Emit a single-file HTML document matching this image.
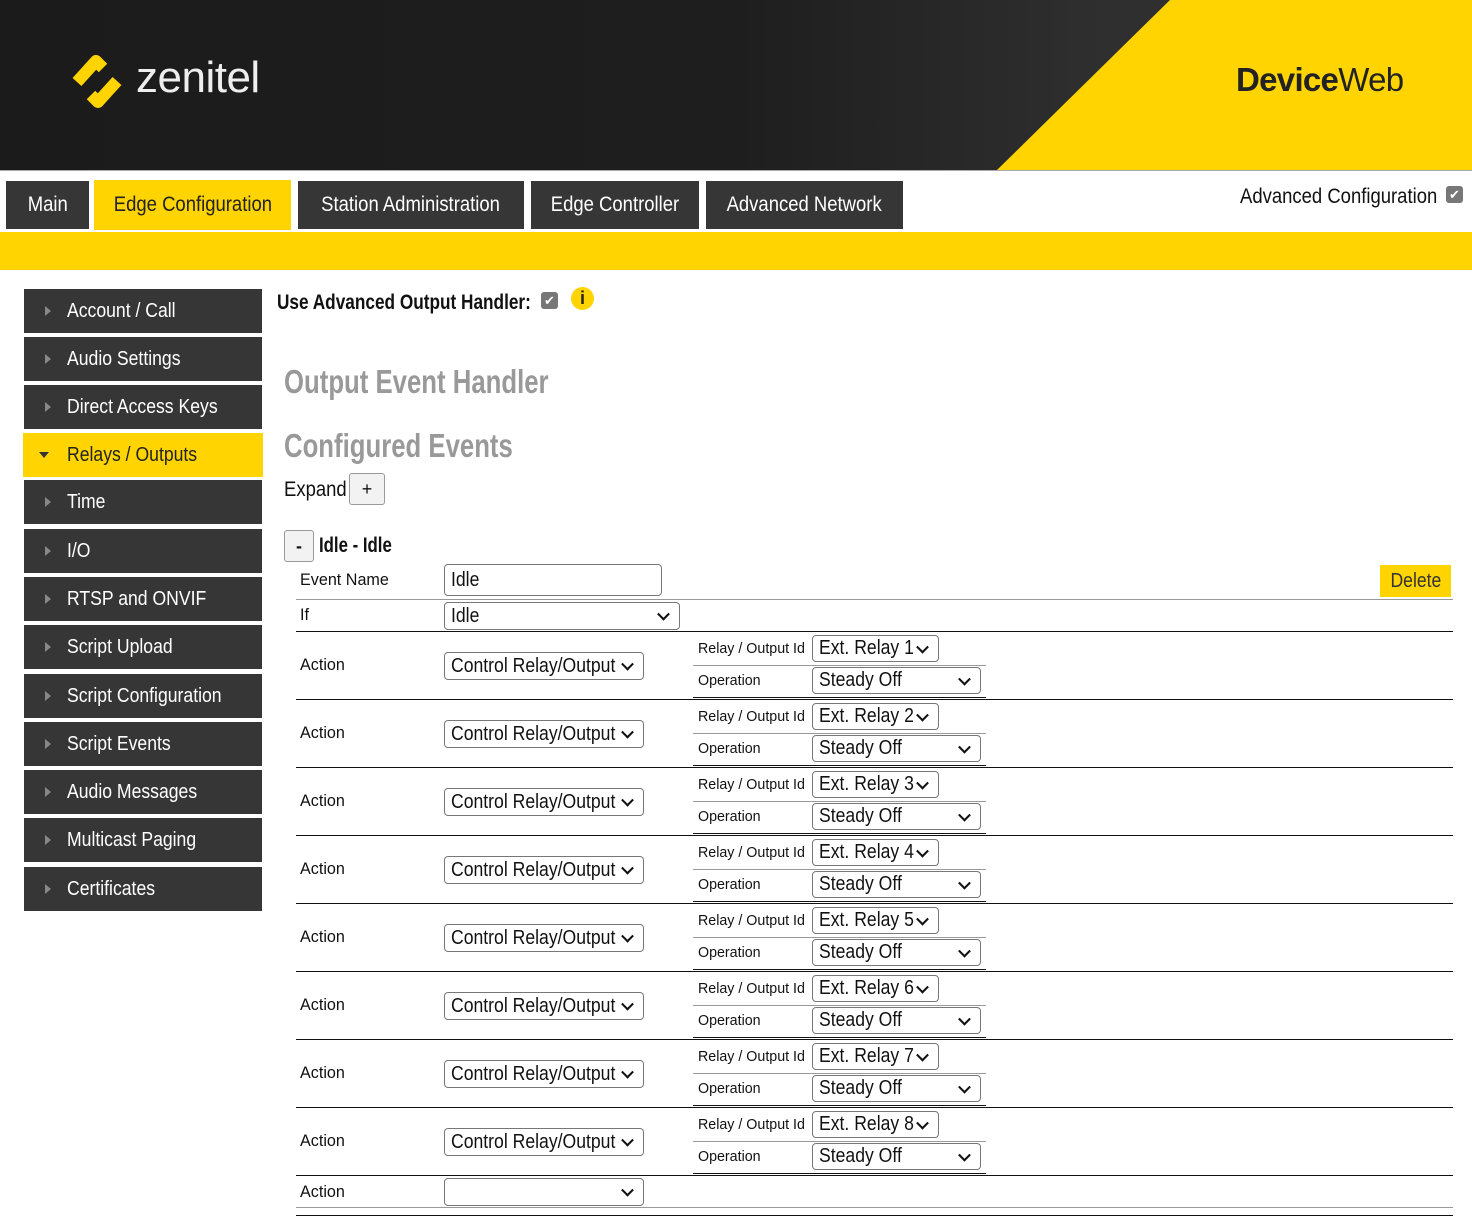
<!DOCTYPE html>
<html><head><meta charset="utf-8"><style>
*{box-sizing:border-box;margin:0;padding:0}
body{width:1472px;height:1224px;position:relative;background:#fff;font-family:"Liberation Sans",sans-serif;color:#111;overflow:hidden}
.a{position:absolute;white-space:nowrap}
.n{display:inline-block;transform:scaleX(.88);transform-origin:0 50%;white-space:nowrap}
.c{transform-origin:50% 50%}
.tab{position:absolute;top:181px;height:48px;background:#363636;color:#fff;font-size:21px;line-height:48px;text-align:center;white-space:nowrap}
.side{position:absolute;left:24px;width:238px;height:44px;background:#363636;color:#fff;font-size:20px;line-height:44px;padding-left:43px;white-space:nowrap}
.side:before{content:"";position:absolute;left:21px;top:17px;border-left:6px solid #888;border-top:5px solid transparent;border-bottom:5px solid transparent}
.side.y:before{display:none}
.sel{position:absolute;border:1px solid #777;border-radius:4px;background:#fff;font-size:20px;padding-left:6px;color:#111;white-space:nowrap;overflow:hidden}
.sel.ar:after{content:"";position:absolute;right:11px;top:50%;width:7px;height:7px;border-right:2px solid #111;border-bottom:2px solid #111;transform:translateY(-70%) rotate(45deg)}
.lbl{position:absolute;font-size:17px;color:#111;white-space:nowrap}
.sm{position:absolute;font-size:15px;color:#111;white-space:nowrap}
.lbl .n,.sm .n{transform:scaleX(.95)}
.hl{position:absolute;height:1px}
</style></head><body>
<div class="a" style="left:0;top:0;width:1472px;height:170px;background:linear-gradient(90deg,#1b1b1b 0%,#1e1e1e 50%,#2f2f2f 75%)"></div>
<svg class="a" style="left:0;top:0" width="1472" height="171"><polygon points="1170,0 1472,0 1472,170 997,170" fill="#ffd400"/>
<polyline points="77,82 96,61 103,68" fill="none" stroke="#ffd400" stroke-width="12" stroke-linejoin="round"/>
<polyline points="117,81 98,102 91,95" fill="none" stroke="#ffd400" stroke-width="12" stroke-linejoin="round"/></svg>
<div class="a" style="left:136px;top:50px;font-size:44px;color:#eee;line-height:56px;letter-spacing:-0.5px">zenitel</div>
<div class="a" style="left:1236px;top:58px;font-size:33px;color:#222;line-height:44px;letter-spacing:-0.7px"><b>Device</b>Web</div>
<div class="a" style="left:0;top:170px;width:1472px;height:1px;background:#aaa"></div>
<div class="tab" style="left:6px;width:83px"><span class="n c">Main</span></div>
<div class="tab" style="left:94px;width:197px;top:180px;height:50px;background:#ffd400;color:#222;line-height:50px"><span class="n c">Edge Configuration</span></div>
<div class="tab" style="left:298px;width:226px"><span class="n c">Station Administration</span></div>
<div class="tab" style="left:531px;width:168px"><span class="n c">Edge Controller</span></div>
<div class="tab" style="left:706px;width:197px"><span class="n c">Advanced Network</span></div>
<div class="a" style="left:1240px;top:184px;font-size:21px;line-height:26px"><span class="n">Advanced Configuration</span></div>
<div class="a" style="left:1446px;top:186px;width:17px;height:17px;background:#777;border-radius:3px;color:#fff;font-size:13px;text-align:center;line-height:17px">✔</div>
<div class="a" style="left:0;top:232px;width:1472px;height:38px;background:#ffd400"></div>

<div class="side" style="top:289px"><span class="n">Account / Call</span></div>
<div class="side" style="top:337px"><span class="n">Audio Settings</span></div>
<div class="side" style="top:385px"><span class="n">Direct Access Keys</span></div>
<div class="side y" style="top:433px;left:23px;width:240px;background:#ffd400;color:#222;padding-left:44px"><span class="n">Relays / Outputs</span></div>
<div class="a" style="left:39px;top:452px;border-top:6px solid #333;border-left:5px solid transparent;border-right:5px solid transparent"></div>
<div class="side" style="top:480px"><span class="n">Time</span></div>
<div class="side" style="top:529px"><span class="n">I/O</span></div>
<div class="side" style="top:577px"><span class="n">RTSP and ONVIF</span></div>
<div class="side" style="top:625px"><span class="n">Script Upload</span></div>
<div class="side" style="top:674px"><span class="n">Script Configuration</span></div>
<div class="side" style="top:722px"><span class="n">Script Events</span></div>
<div class="side" style="top:770px"><span class="n">Audio Messages</span></div>
<div class="side" style="top:818px"><span class="n">Multicast Paging</span></div>
<div class="side" style="top:867px"><span class="n">Certificates</span></div>

<div class="a" style="left:277px;top:290px;font-size:21px;line-height:26px;font-weight:bold"><span class="n" style="transform:scaleX(.82)">Use Advanced Output Handler:</span></div>
<div class="a" style="left:541px;top:292px;width:17px;height:17px;background:#777;border-radius:3px;color:#fff;font-size:13px;text-align:center;line-height:17px">✔</div>
<div class="a" style="left:571px;top:287px;width:23px;height:23px;background:#ffd400;border-radius:50%;color:#222;font-size:18px;font-weight:bold;text-align:center;line-height:23px">i</div>
<div class="a" style="left:284px;top:362px;font-size:33px;font-weight:bold;color:#999;line-height:40px"><span class="n" style="transform:scaleX(.78)">Output Event Handler</span></div>
<div class="a" style="left:284px;top:426px;font-size:33px;font-weight:bold;color:#999;line-height:40px"><span class="n" style="transform:scaleX(.78)">Configured Events</span></div>
<div class="a" style="left:284px;top:477px;font-size:21px;line-height:26px"><span class="n">Expand</span></div>
<div class="a" style="left:349px;top:473px;width:36px;height:32px;border:1px solid #999;border-radius:3px;background:#f2f2f2;font-size:18px;text-align:center;line-height:30px">+</div>
<div class="a" style="left:284px;top:530px;width:30px;height:32px;border:1px solid #999;border-radius:3px;background:#f2f2f2;font-size:18px;font-weight:bold;text-align:center;line-height:30px">-</div>
<div class="a" style="left:319px;top:533px;font-size:21px;font-weight:bold;line-height:26px"><span class="n" style="transform:scaleX(.8)">Idle - Idle</span></div>

<div class="lbl" style="left:300px;top:570px"><span class="n">Event Name</span></div>
<div class="sel" style="left:444px;top:564px;width:218px;height:32px;line-height:30px"><span class="n">Idle</span></div>
<div class="a" style="left:1380px;top:565px;width:71px;height:32px;background:#ffd400;color:#333;font-size:20px;text-align:center;line-height:32px"><span class="n c">Delete</span></div>
<div class="hl" style="left:296px;top:599px;width:1157px;background:#999"></div>
<div class="lbl" style="left:300px;top:605px"><span class="n">If</span></div>
<div class="sel ar" style="left:444px;top:602px;width:236px;height:28px;line-height:26px"><span class="n">Idle</span></div>
<div class="hl" style="left:296px;top:631px;width:1157px;background:#111"></div>

<div id="blocks"></div>
<script>
var h='';
for(var i=0;i<8;i++){var T=632+68*i;
h+='<div class="lbl" style="left:300px;top:'+(T+23)+'px"><span class="n">Action</span></div>'+
'<div class="sel ar" style="left:444px;top:'+(T+20)+'px;width:200px;height:28px;line-height:26px"><span class="n">Control Relay/Output</span></div>'+
'<div class="sm" style="left:698px;top:'+(T+8)+'px"><span class="n">Relay / Output Id</span></div>'+
'<div class="sel ar" style="left:812px;top:'+(T+3)+'px;width:127px;height:27px;line-height:25px"><span class="n">Ext. Relay '+(i+1)+'</span></div>'+
'<div class="hl" style="left:693px;top:'+(T+33)+'px;width:293px;background:#999"></div>'+
'<div class="sm" style="left:698px;top:'+(T+40)+'px"><span class="n">Operation</span></div>'+
'<div class="sel ar" style="left:812px;top:'+(T+35)+'px;width:169px;height:27px;line-height:25px"><span class="n">Steady Off</span></div>'+
'<div class="hl" style="left:693px;top:'+(T+65)+'px;width:293px;background:#111"></div>'+
'<div class="hl" style="left:296px;top:'+(T+67)+'px;width:1157px;background:#111"></div>';}
document.getElementById('blocks').innerHTML=h;
</script>
<div class="lbl" style="left:300px;top:1182px"><span class="n">Action</span></div>
<div class="sel ar" style="left:444px;top:1178px;width:200px;height:28px"></div>
<div class="hl" style="left:296px;top:1207px;width:1157px;background:#999"></div>
<div class="hl" style="left:296px;top:1215px;width:1157px;background:#111"></div>
</body></html>
